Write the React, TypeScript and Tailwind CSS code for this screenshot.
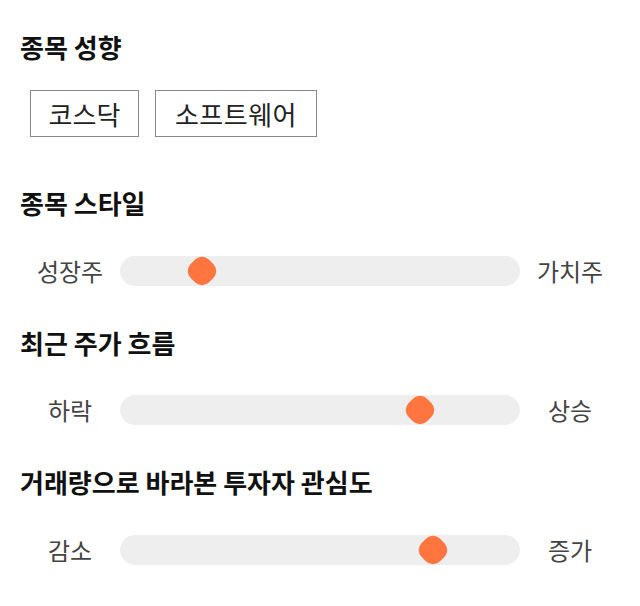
import React from "react";

const font = { fontFamily: '"Noto Sans CJK KR", "Noto Sans", sans-serif' };

function Slider({ left, right, pos }: { left: string; right: string; pos: number }) {
  return (
    <div className="flex items-center h-[30px]">
      <div className="w-[100px] text-center text-[24px] leading-[30px] text-[#444]">{left}</div>
      <div className="relative flex-1 h-[30px] rounded-full bg-[#eeeeee]">
        <div
          className="absolute top-[2px] w-[26px] h-[26px] -ml-[13px] rotate-45 rounded-[10px] bg-[#ff7540]"
          style={{ left: `${pos}px` }}
        />
      </div>
      <div className="w-[100px] text-center text-[24px] leading-[30px] text-[#444]">{right}</div>
    </div>
  );
}

export default function App() {
  return (
    <div className="w-[640px] h-[606px] bg-white px-5 pt-[30px]" style={font}>
      <h2 className="text-[26px] leading-[34px] font-bold text-[#111]">종목 성향</h2>
      <div className="mt-[26px] flex gap-4 pl-[10px]">
        <div className="w-[109px] h-[47px] flex items-center justify-center border border-[#888] text-[26px] text-[#222]">코스닥</div>
        <div className="w-[162px] h-[47px] flex items-center justify-center border border-[#888] text-[26px] tracking-[0.5px] text-[#222]">소프트웨어</div>
      </div>
      <h2 className="mt-[49px] text-[26px] leading-[34px] font-bold text-[#111]">종목 스타일</h2>
      <div className="mt-[36px]">
        <Slider left="성장주" right="가치주" pos={82} />
      </div>
      <h2 className="mt-[40px] text-[26px] leading-[34px] font-bold text-[#111]">최근 주가 흐름</h2>
      <div className="mt-[35px]">
        <Slider left="하락" right="상승" pos={300} />
      </div>
      <h2 className="mt-[40px] text-[26px] leading-[34px] font-bold text-[#111]">거래량으로 바라본 투자자 관심도</h2>
      <div className="mt-[36px]">
        <Slider left="감소" right="증가" pos={313} />
      </div>
    </div>
  );
}
